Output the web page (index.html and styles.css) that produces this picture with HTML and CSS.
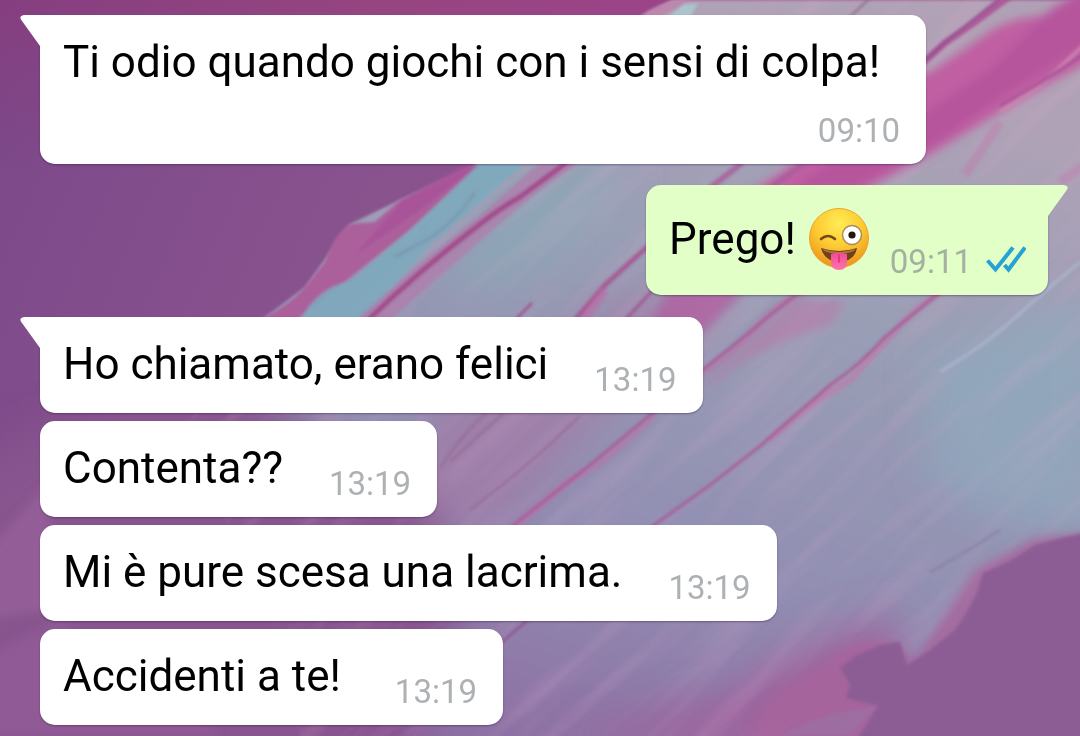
FILE: index.html
```
<!DOCTYPE html>
<html lang="it">
<head>
<meta charset="utf-8">
<meta name="viewport" content="width=device-width, initial-scale=1">
<title>Chat</title>
<link rel="stylesheet" href="styles.css">
</head>
<body>
<svg class="wallpaper" viewBox="0 0 1080 736" preserveAspectRatio="none" aria-hidden="true">
  <defs>
    <linearGradient id="plum" x1="0" y1="0" x2="1" y2="0.3"><stop offset="0" stop-color="#7b4889"/><stop offset="0.4" stop-color="#89538e"/></linearGradient>
    <linearGradient id="plumTop" x1="0" y1="0" x2="1" y2="0"><stop offset="0" stop-color="#853f80"/><stop offset=".35" stop-color="#964580"/><stop offset=".6" stop-color="#9c4488"/></linearGradient>
    <linearGradient id="fade" x1="0" y1="0" x2="0" y2="1"><stop offset="0" stop-color="#fff"/><stop offset="1" stop-color="#000"/></linearGradient>
    <mask id="topFade"><rect width="1080" height="170" fill="url(#fade)"/></mask>
    <linearGradient id="sky" gradientUnits="userSpaceOnUse" x1="760" y1="20" x2="520" y2="736"><stop offset="0" stop-color="#b0a2b6"/><stop offset="0.35" stop-color="#989eb5"/><stop offset="0.7" stop-color="#918eb2"/><stop offset="1" stop-color="#8d71a4"/></linearGradient>
    <filter id="soft1" x="-10%" y="-10%" width="120%" height="120%"><feGaussianBlur stdDeviation="1.5"/></filter>
    <filter id="soft4" x="-20%" y="-20%" width="140%" height="140%"><feGaussianBlur stdDeviation="5"/></filter>
    <filter id="soft20" x="-50%" y="-50%" width="200%" height="200%"><feGaussianBlur stdDeviation="20"/></filter>
    <filter id="grain" x="0" y="0" width="100%" height="100%"><feTurbulence type="fractalNoise" baseFrequency="0.005 0.05" numOctaves="3" seed="7"/><feColorMatrix values="0 0 0 0 .75  0 0 0 0 .42  0 0 0 0 .65  1.8 0 0 0 -0.8"/><feGaussianBlur stdDeviation="1"/></filter>
    <clipPath id="paint"><path d="M190 420L265 317L305 287L350 224L400 200L475 165L640 20L690 0H1080V535L1035 542L983 573L977 593L955 630L907 665L855 650L780 736H300Z"/></clipPath>
  </defs>
  <rect width="1080" height="736" fill="url(#plum)"/>
  <rect width="1080" height="170" fill="url(#plumTop)" mask="url(#topFade)"/>
  <path d="M130 480L265 317L305 287L350 224L400 200L475 165L640 17L672 0H1100V760H0Z" fill="url(#sky)" filter="url(#soft1)"/>
  <g filter="url(#soft20)">
    <path d="M930 360Q1010 310 1100 300V520Q1020 540 930 480Z" fill="#8fa9be" opacity=".7"/>
    <ellipse cx="540" cy="225" rx="100" ry="35" fill="#8da5b6" transform="rotate(-35 540 225)"/>
    <path d="M430 410L640 290H740L620 400L500 525H380Z" fill="#a574a3" opacity=".6"/>
    <path d="M-60 800V480L200 360L300 420L440 520L460 620L400 800Z" fill="#88558f"/>
    <path d="M560 736L720 700L790 655L900 610L880 760Z" fill="#a35c98" opacity=".8"/>
  </g>
  <g clip-path="url(#paint)"><rect x="-300" y="-500" width="1700" height="1700" filter="url(#grain)" opacity=".25" transform="rotate(-43 540 368)"/></g>
  <g filter="url(#soft4)">
    <path d="M-20 560L50 480V610L-20 620Z" fill="#99639b" opacity=".7"/>
    <path d="M-20 660L60 620L220 736H-20Z" fill="#905a96"/>
    <path d="M890 82L930 72L985 35Q1010 15 1060 15L1100 -20V55L1020 100L926 157L860 192H750L880 110Z" fill="#c05fa2"/>
    <path d="M926 112L990 70L1050 10L1100 -20V35L1000 98L926 150L850 190L790 190L880 130Z" fill="#b6549c"/>
    <path d="M640 340L670 290H745L700 335Z" fill="#b060a0" opacity=".8"/>
    <path d="M700 390L790 300H845L830 325Q750 350 720 380Z" fill="#b878a9" opacity=".6"/>
  </g>
  <g filter="url(#soft1)">
    <path d="M220 370L265 317Q290 305 305 287L325 262Q335 232 350 224L375 222L400 200L475 165L480 166L410 230L300 317L270 350Z" fill="#ab5f9b"/>
    <path d="M355 255L420 210L478 165L465 164L405 198Z" fill="#a84f98" opacity=".7"/>
    <path d="M300 320Q320 285 350 282L410 230L480 163L525 163Q495 190 430 245L365 320Z" fill="#7daabd" opacity=".85"/>
    <path d="M355 320Q420 262 480 215Q520 180 540 163H580Q545 185 510 215L390 320Z" fill="#b07bab" opacity=".7"/>
    <path d="M640 17Q655 4 680 0H692L660 17Z" fill="#bc86ad"/>
    <path d="M668 17L684 4H698L690 17Z" fill="#abc3cf"/>
  </g>
  <g filter="url(#soft1)" fill="none">
    <path d="M368 320Q420 270 475 228Q500 208 520 197L570 160" stroke="#a24b8b" stroke-width="5"/>
    <path d="M475 192Q455 222 430 238L395 257" stroke="#738ba9" stroke-width="2" opacity=".7"/>
    <path d="M575 320L605 285L655 240" stroke="#a65b96" stroke-width="5"/>
    <path d="M585 318L605 290" stroke="#bd69a6" stroke-width="9" opacity=".6"/>
    <path d="M625 320L655 288M515 320L532 303" stroke="#9c5a94" stroke-width="3"/>
    <path d="M710 188L742 163M770 188L805 163" stroke="#a95d9a" stroke-width="6" opacity=".8"/>
    <path d="M915 70L945 43L975 22L1010 -4" stroke="#ad5a99" stroke-width="7"/>
    <path d="M915 69L950 38L1000 -2" stroke="#8b4d89" stroke-width="2"/>
    <path d="M1000 112L1040 86L1085 44" stroke="#cf86b3" stroke-width="4" opacity=".8"/>
    <path d="M1000 106L1040 83L1085 53" stroke="#a85399" stroke-width="3"/>
    <path d="M965 175L1000 122M1060 182L1085 165" stroke="#bd7fae" stroke-width="9" opacity=".5"/>
    <path d="M850 17L870 -2" stroke="#8f6c94" stroke-width="2"/>
    <path d="M805 292Q780 300 752 332Q725 360 695 377M655 413Q610 460 570 480L510 530" stroke="#b873a8" stroke-width="9" opacity=".55"/>
    <path d="M800 292Q775 310 750 332L700 372L650 415L590 465L510 528" stroke="#a5609a" stroke-width="3"/>
    <path d="M940 292Q910 312 885 342L850 380Q800 410 770 440" stroke="#c076aa" stroke-width="7" opacity=".6"/>
    <path d="M940 292L885 337Q860 365 830 385L760 446L710 485L650 528" stroke="#a56199" stroke-width="3"/>
    <path d="M1080 262Q1040 295 1015 318Q985 345 940 372" stroke="#aebbd4" stroke-width="3" opacity=".7"/>
    <path d="M440 468Q465 430 490 410M450 462L505 412M470 510Q530 465 580 416" stroke="#92608f" stroke-width="2" opacity=".7"/>
    <path d="M500 644L530 618" stroke="#8b5b94" stroke-width="3"/>
    <path d="M930 572Q970 550 1000 530" stroke="#8480a8" stroke-width="2"/>
  </g>
  <g filter="url(#soft4)">
    <path d="M1100 532L1035 538L975 570L955 600L915 660L890 640L850 645L820 665L770 700L740 750H1100Z" fill="#a8649c" opacity=".8"/>
  </g>
  <g filter="url(#soft1)">
    <path d="M1100 530L1065 537L1035 545L1008 562L983 573L977 593L965 615L955 630L930 650L907 665L900 642L880 645L855 656L840 668L850 684L846 698L878 706L850 750H1100Z" fill="#8c5d94"/>
    <path d="M780 736Q820 712 878 706L850 736Z" fill="#9b6fa3" opacity=".7"/>
  </g>
</svg>

<main class="chat">
  <article class="bubble bubble--in bubble--tail bubble--stacked">
    <svg class="tail" viewBox="0 0 24 34" aria-hidden="true"><path d="M24 0H4Q-2 1 2 6L20 31L24 34Z"/></svg>
    <p class="text">Ti odio quando giochi con i sensi di colpa!</p>
    <time class="time" datetime="09:10">09:10</time>
  </article>

  <article class="bubble bubble--out bubble--tail">
    <svg class="tail" viewBox="0 0 24 34" aria-hidden="true"><path d="M0 0H20Q26 1 22 6L4 31L0 34Z"/></svg>
    <p class="text">Prego!</p>
    <svg class="emoji" viewBox="0 0 60 62" role="img" aria-label="Faccina con linguaccia e occhiolino">
      <defs>
        <radialGradient id="face" cx=".5" cy=".25" r=".78"><stop offset="0" stop-color="#ffec55"/><stop offset=".5" stop-color="#fdcb33"/><stop offset="1" stop-color="#ea8f1a"/></radialGradient>
        <linearGradient id="tongue" x1="0" y1="0" x2="0" y2="1"><stop offset="0" stop-color="#f04b94"/><stop offset="1" stop-color="#ff74ae"/></linearGradient>
      </defs>
      <circle cx="30" cy="30" r="29.5" fill="url(#face)" stroke="#eba52d"/>
      <path d="M12 40Q30 46 48 40Q46 53 30 54Q15 53 12 40Z" fill="#704019"/>
      <path d="M14 41Q30 47 46 41L45 43Q30 49 15 43Z" fill="#a8793f"/>
      <path d="M22 46Q30 43 38 46V54Q38 62 30 62Q22 62 22 54Z" fill="url(#tongue)"/>
      <path d="M30 47V54" stroke="#d82f78" stroke-width="1.5" stroke-linecap="round"/>
      <path d="M12 31Q19 25 26 31" fill="none" stroke="#774716" stroke-width="2.6" stroke-linecap="round"/>
      <circle cx="43" cy="27" r="9.5" fill="#fff" stroke="#a98d5b" stroke-width="1.5"/>
      <circle cx="43" cy="27" r="3.6" fill="#21170f"/>
    </svg>
    <time class="time" datetime="09:11">09:11</time>
    <svg class="ticks" viewBox="0 0 40 28" role="img" aria-label="Letto"><path d="M1.5 15.5L9.5 24.500L27 2.500M18.500 20L22.500 24.500L39 2.500"/></svg>
  </article>

  <article class="bubble bubble--in bubble--tail">
    <svg class="tail" viewBox="0 0 24 34" aria-hidden="true"><path d="M24 0H4Q-2 1 2 6L20 31L24 34Z"/></svg>
    <p class="text">Ho chiamato, erano felici</p>
    <time class="time" datetime="13:19">13:19</time>
  </article>

  <article class="bubble bubble--in">
    <p class="text">Contenta??</p>
    <time class="time" datetime="13:19">13:19</time>
  </article>

  <article class="bubble bubble--in">
    <p class="text">Mi è pure scesa una lacrima.</p>
    <time class="time" datetime="13:19">13:19</time>
  </article>

  <article class="bubble bubble--in bubble--roomy">
    <p class="text">Accidenti a te!</p>
    <time class="time" datetime="13:19">13:19</time>
  </article>
</main>
</body>
</html>
```
FILE: styles.css
```
* {
  box-sizing: border-box;
}

body {
  margin: 0;
  min-height: 100vh;
  background: #7b4889;
  font-family: Roboto, "Liberation Sans", sans-serif;
}

.wallpaper {
  position: fixed;
  inset: 0;
  z-index: -1;
  width: 100%;
  height: 100%;
}

.chat {
  display: flex;
  flex-direction: column;
  align-items: flex-start;
  gap: 8px;
  padding: 15px 32px 11px 40px;
}

.bubble {
  position: relative;
  display: flex;
  align-items: flex-end;
  max-width: 90%;
  padding: 21px 26px 13px 23px;
  border-radius: 15px;
  background: var(--fill);
  box-shadow: 0 1px 2px rgba(40, 20, 60, 0.4);
}

.bubble--in {
  --fill: #ffffff;
}

.bubble--out {
  --fill: #e1ffc7;
  align-self: flex-end;
  margin: 13px 0 14px;
  padding-right: 22px;
}

.bubble--in.bubble--tail {
  border-top-left-radius: 0;
}

.bubble--out.bubble--tail {
  border-top-right-radius: 0;
}

.tail {
  position: absolute;
  top: 0;
  width: 24px;
  height: 34px;
  fill: var(--fill);
}

.bubble--in .tail {
  left: -20px;
}

.bubble--out .tail {
  right: -20px;
}

.text {
  margin: 0 0 10px;
  color: #000000;
  font-size: 44px;
  line-height: 52px;
}

.time {
  margin-left: 46px;
  color: #adb1b3;
  font-size: 33px;
  line-height: 40px;
}

.bubble--stacked {
  flex-direction: column;
  gap: 13px;
}

.bubble--stacked .text {
  padding-right: 20px;
}

.bubble--roomy .text {
  padding-right: 8px;
}

.bubble--out .text {
  line-height: 66px;
}

.bubble--out .time {
  margin-left: 21px;
  color: #a5b1a0;
}

.emoji {
  width: 60px;
  height: 62px;
  margin: 0 0 12px 13px;
}

.ticks {
  width: 40px;
  height: 28px;
  margin: 0 0 9px 14px;
  fill: none;
  stroke: #26a3d2;
  stroke-width: 4;
}
```
